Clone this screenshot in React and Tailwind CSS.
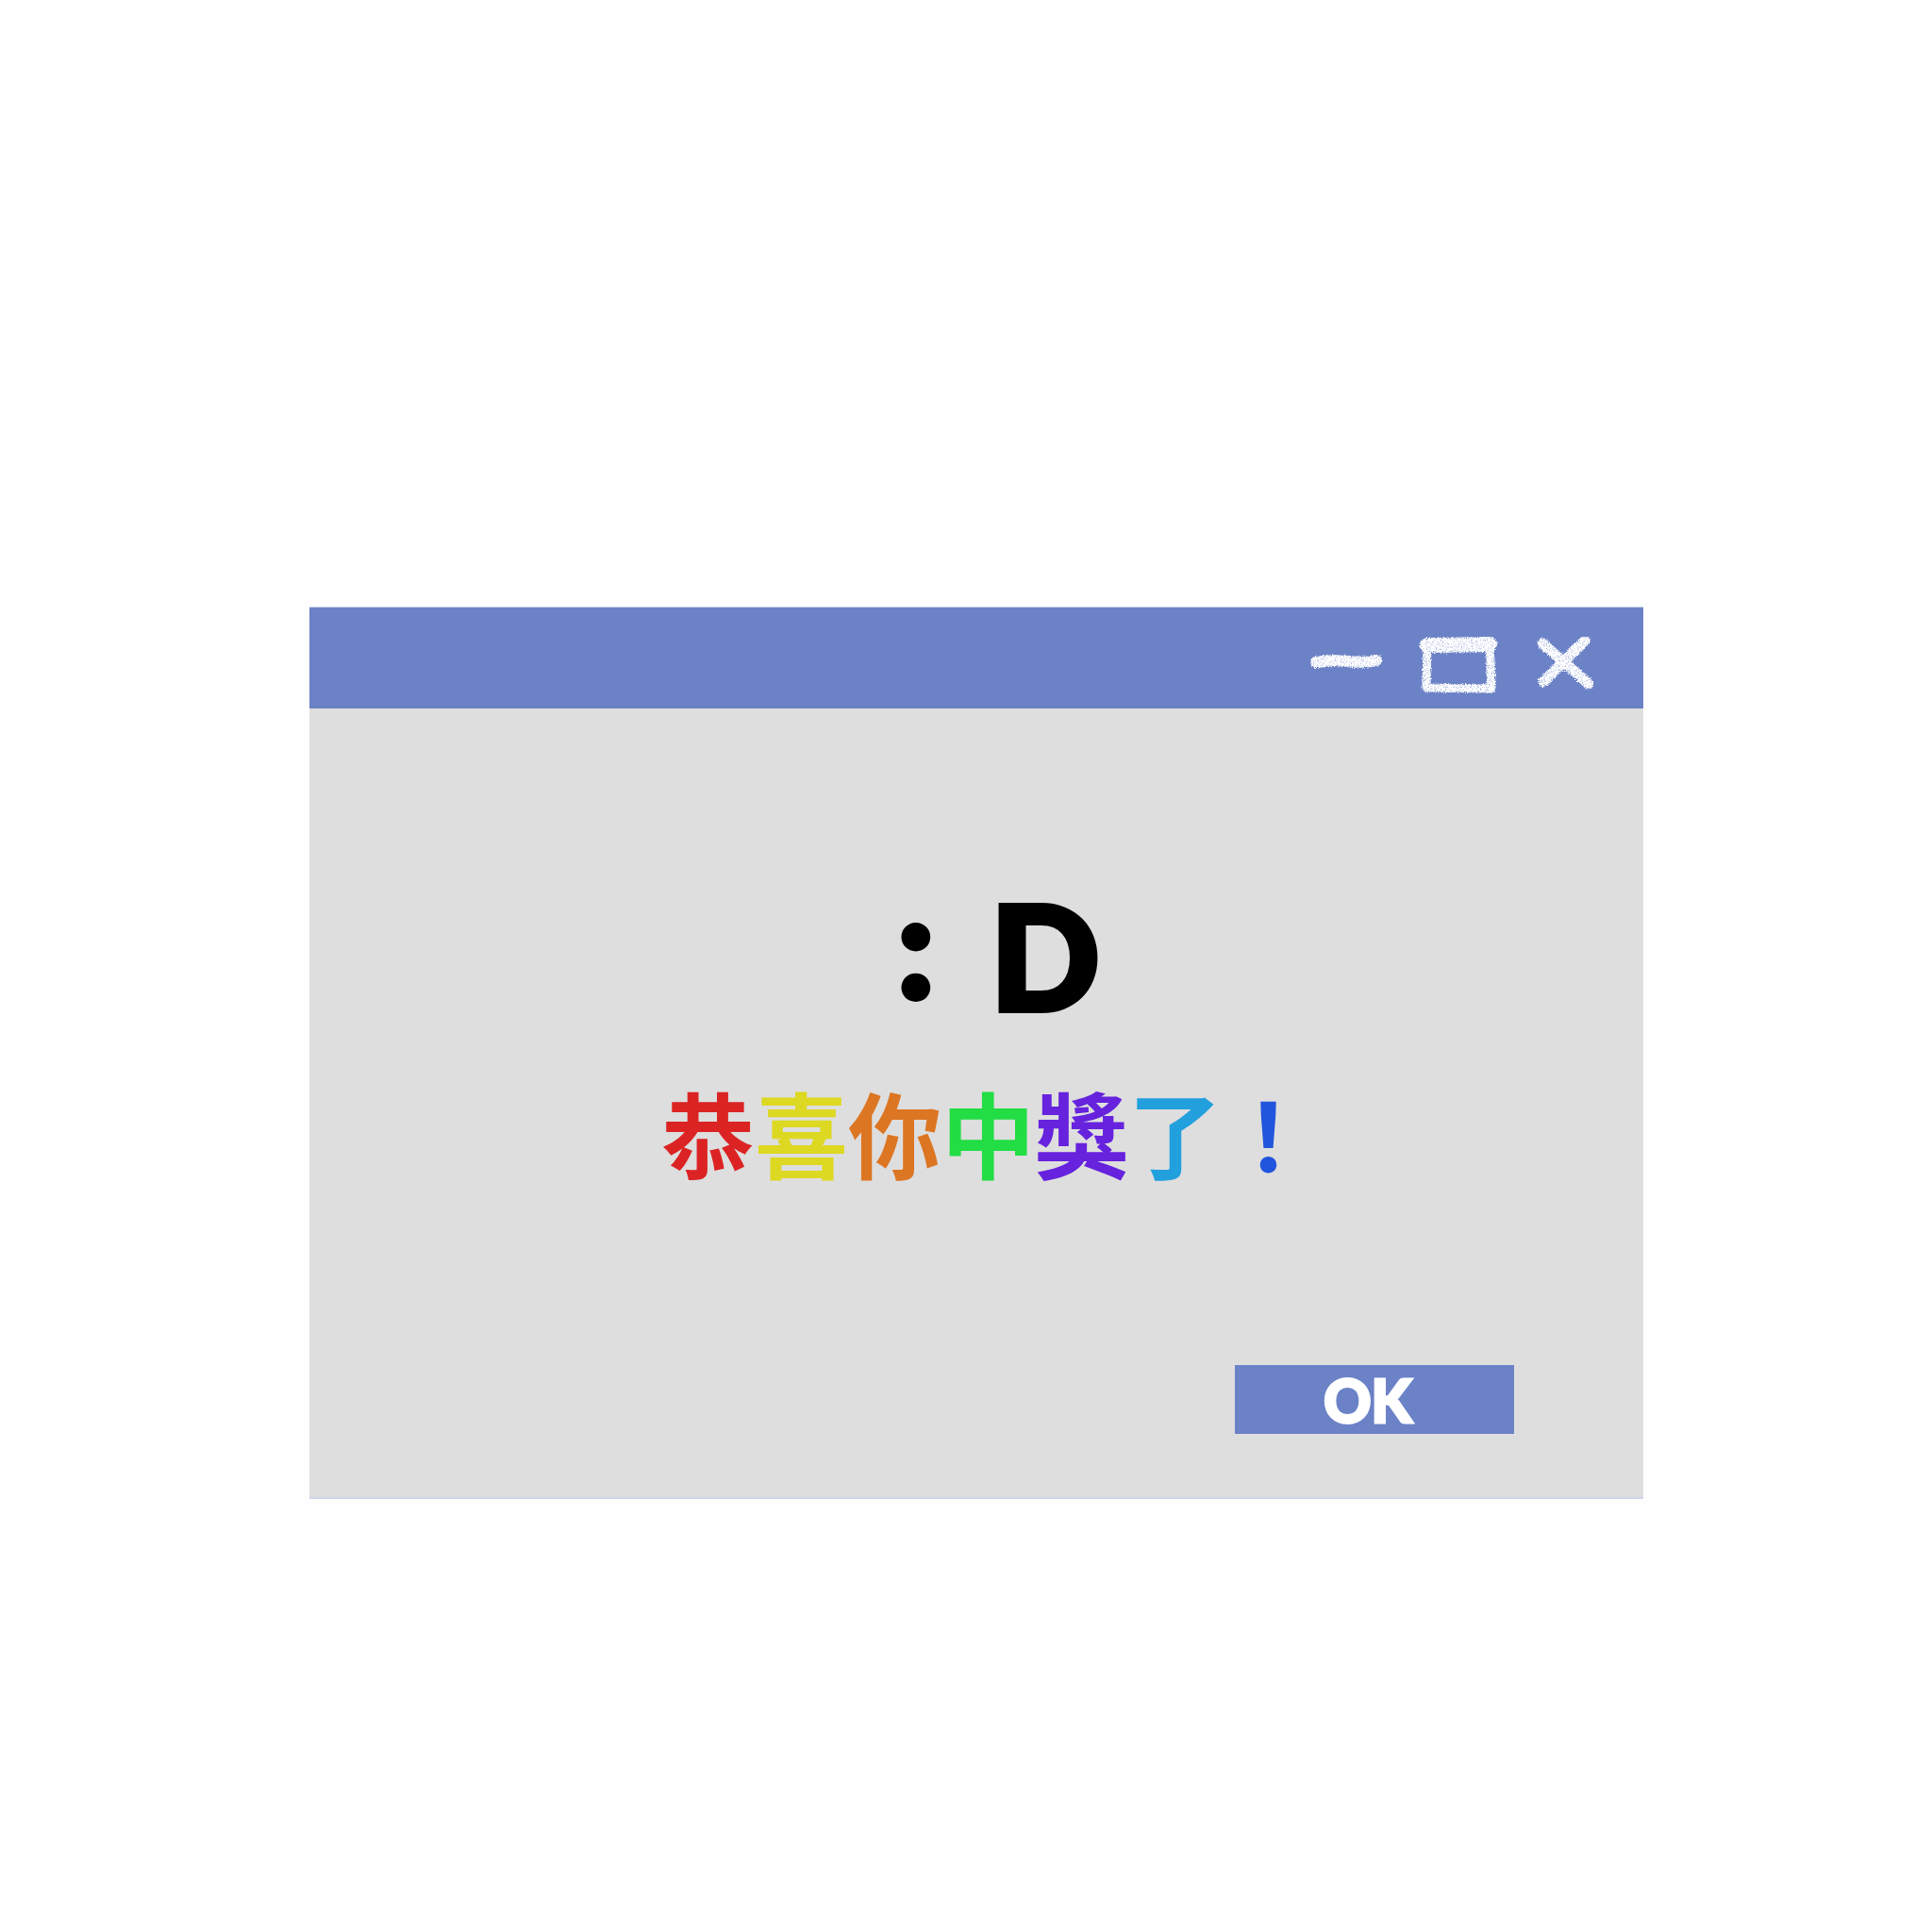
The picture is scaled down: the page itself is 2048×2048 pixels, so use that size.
import React from 'react';

const chars = [
  { ch: '恭', color: 'text-[#dc2323]' },
  { ch: '喜', color: 'text-[#ddd821]' },
  { ch: '你', color: 'text-[#dc7623]' },
  { ch: '中', color: 'text-[#22dd44]' },
  { ch: '獎', color: 'text-[#6622dd]' },
  { ch: '了', color: 'text-[#22a0dd]' },
  { ch: '！', color: 'text-[#2255dd]' },
];

// chalky window buttons: minimize, maximize, close
function ChalkControls() {
  return (
    <svg width="300" height="60" viewBox="0 0 300 60">
      <defs>
        <filter id="chalk" x="-10%" y="-15%" width="120%" height="130%">
          <feTurbulence type="fractalNoise" baseFrequency="1.1" numOctaves="2" seed="7" result="noise" />
          <feDisplacementMap in="SourceGraphic" in2="noise" scale="5" xChannelSelector="R" yChannelSelector="G" result="rough" />
          <feTurbulence type="fractalNoise" baseFrequency="1.6" numOctaves="1" seed="2" result="grain" />
          <feColorMatrix in="grain" type="matrix" values="0 0 0 0 1  0 0 0 0 1  0 0 0 0 1  0 0 0 -2.2 2.1" result="grainA" />
          <feComposite in="rough" in2="grainA" operator="in" />
        </filter>
      </defs>
      <g filter="url(#chalk)" stroke="#ffffff" fill="none" strokeLinecap="round" strokeLinejoin="round">
        {/* minus */}
        <path d="M6 27 Q 22 24 40 26 T 70 25" strokeWidth="12" />
        {/* square */}
        <path d="M124 9 L190 8" strokeWidth="16" />
        <path d="M124 6 L123 54 L192 55 L190 6" strokeWidth="9" />
        {/* close */}
        <path d="M246 7 L295 50" strokeWidth="11" />
        <path d="M291 4 L247 48" strokeWidth="11" />
      </g>
    </svg>
  );
}

export default function App() {
  return (
    <div className="min-h-[2048px] w-[2048px] bg-[#fefefe] pt-[643px] pl-[328px]" style={{ fontFamily: 'Lato, "Noto Sans CJK TC", sans-serif' }}>
      <div className="w-[1414px] flex flex-col">
        {/* title bar */}
        <div className="h-[108px] bg-[#6b82c6] border-t border-[#c9d1ec] flex justify-end items-start pt-[31px] pr-[53px]">
          <ChalkControls />
        </div>

        {/* body */}
        <div className="bg-[#dedede] border-b-2 border-[#cfd5e6] flex flex-col pt-[185px] pb-[67px]">
          <div className="flex items-start pl-[623px] h-[152px] text-[152px] leading-none font-black text-black [-webkit-text-stroke:6px_black]" style={{ fontFamily: 'Lato, sans-serif' }}>
            <span className="w-[99px] -mt-[13px]">:</span>
            <span>D</span>
          </div>

          <div className="mt-[62px] pl-[373px] h-[100px]">
            <div className="flex text-[99px] leading-none font-bold" style={{ fontFamily: '"Noto Sans CJK TC", sans-serif' }}>
              {chars.map((c) => (
                <span key={c.ch} className={c.color}>{c.ch}</span>
              ))}
            </div>
          </div>

          <div className="mt-[197px] flex justify-end pr-[137px]">
            <button className="w-[296px] h-[73px] bg-[#6b82c6] text-white text-[62px] font-black leading-none flex items-center justify-center pr-[14px] [-webkit-text-stroke:3px_white]" style={{ fontFamily: 'Lato, sans-serif' }}>
              OK
            </button>
          </div>
        </div>
      </div>
    </div>
  );
}
